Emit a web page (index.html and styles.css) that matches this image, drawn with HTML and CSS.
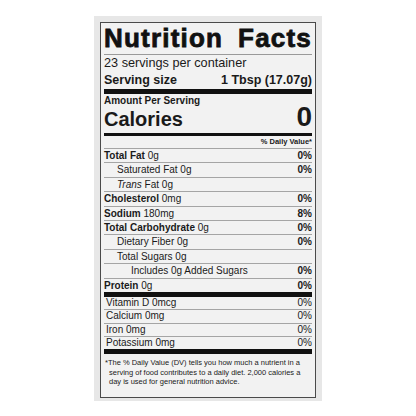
FILE: index.html
```html
<!DOCTYPE html>
<html lang="en">
<head>
    <meta charset="UTF-8">
    <title>Nutrition Facts</title>
    <link rel="stylesheet" href="styles.css">
</head>
<body>
    <div class="panel">
        <div class="label">
            <div class="title"><span>Nutrition</span><span>Facts</span></div>
            <div class="servings">23 servings per container</div>
            <div class="serving-size"><span>Serving size</span><span>1 Tbsp (17.07g)</span></div>
            <div class="amount">Amount Per Serving</div>
            <div class="calories"><span class="cal-name">Calories</span><span class="cal-value">0</span></div>
            <div class="dv-head">% Daily Value*</div>

            <div class="row"><span><b>Total Fat</b> 0g</span><b>0%</b></div>
            <div class="row sub"><span>Saturated Fat 0g</span><b>0%</b></div>
            <div class="row sub"><span><i>Trans</i> Fat 0g</span></div>
            <div class="row"><span><b>Cholesterol</b> 0mg</span><b>0%</b></div>
            <div class="row"><span><b>Sodium</b> 180mg</span><b>8%</b></div>
            <div class="row"><span><b>Total Carbohydrate</b> 0g</span><b>0%</b></div>
            <div class="row sub"><span>Dietary Fiber 0g</span><b>0%</b></div>
            <div class="row sub"><span>Total Sugars 0g</span></div>
            <div class="row sub2"><span>Includes 0g Added Sugars</span><b>0%</b></div>
            <div class="row last"><span><b>Protein</b> 0g</span><b>0%</b></div>

            <div class="vit"><span>Vitamin D 0mcg</span><span>0%</span></div>
            <div class="vit"><span>Calcium 0mg</span><span>0%</span></div>
            <div class="vit"><span>Iron 0mg</span><span>0%</span></div>
            <div class="vit last"><span>Potassium 0mg</span><span>0%</span></div>

            <p class="footnote">*The % Daily Value (DV) tells you how much a nutrient in a serving of food contributes to a daily diet. 2,000 calories a day is used for general nutrition advice.</p>
        </div>
    </div>
</body>
</html>
```

FILE: styles.css
```css
body {
    margin: 0;
    background-color: #fff;
    font-family: "Liberation Sans", Arial, sans-serif;
    color: #1a1a1a;
    display: flex;
    justify-content: center;
    padding-top: 16px;
}
.panel {
    width: 228px;
    box-sizing: border-box;
    padding: 6px 6px 3px 6px;
    background-color: #e7e7e7;
}
.label {
    border: 1px solid #4a4a4a;
    background-color: #f2f2f2;
    padding: 0 3px;
}
.title {
    display: flex;
    justify-content: space-between;
    font-size: 26px;
    font-weight: bold;
    letter-spacing: 1.2px;
    -webkit-text-stroke: 0.8px #111;
    color: #111;
    line-height: 30px;
    padding-bottom: 1px;
    border-bottom: 1px solid #9a9a9a;
}
.servings {
    font-size: 12.7px;
    line-height: 16px;
}
.serving-size {
    display: flex;
    justify-content: space-between;
    font-size: 12.5px;
    font-weight: bold;
    line-height: 18px;
    border-bottom: 5px solid #111;
}
.amount {
    font-size: 10px;
    font-weight: bold;
    line-height: 13px;
}
.calories {
    display: flex;
    justify-content: space-between;
    align-items: baseline;
    height: 26px;
    border-bottom: 3px solid #111;
}
.cal-name {
    font-size: 20px;
    font-weight: bold;
    line-height: 20px;
}
.cal-value {
    font-size: 28px;
    font-weight: bold;
    line-height: 20px;
}
.dv-head {
    text-align: right;
    font-size: 7.5px;
    font-weight: bold;
    line-height: 12px;
    border-bottom: 1px solid #a5a5a5;
}
.row {
    display: flex;
    justify-content: space-between;
    font-size: 10px;
    line-height: 13.4px;
    border-bottom: 1px solid #a5a5a5;
}
.row.sub {
    padding-left: 13px;
}
.row.sub2 {
    padding-left: 27px;
}
.row.last {
    border-bottom: 5px solid #111;
}
.vit {
    display: flex;
    justify-content: space-between;
    font-size: 10px;
    line-height: 12.3px;
    padding-left: 2px;
    border-bottom: 1px solid #a5a5a5;
}
.vit.last {
    border-bottom: 5px solid #111;
}
.footnote {
    margin: 0;
    padding: 4px 4px 10px 5px;
    font-size: 7.5px;
    line-height: 9.5px;
    text-indent: -4px;
}
```
